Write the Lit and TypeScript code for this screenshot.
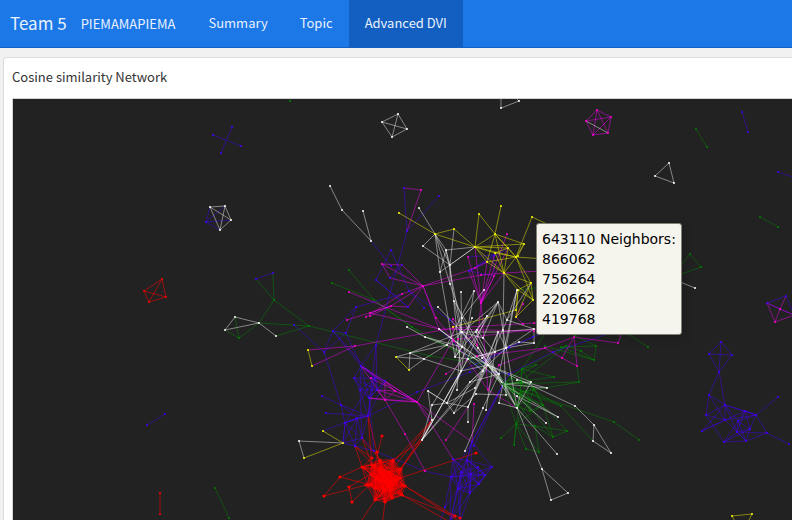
import { LitElement, html, svg, css } from "lit";
import { customElement, property } from "lit/decorators.js";

type Hue = "white" | "yellow" | "magenta" | "blue" | "green" | "red";
type Point = [number, number];

const ORIGIN: Point = [13, 99];

/** Nodes whose colour differs from the last chain that visits them. */
const PINNED: Record<string, Hue> = {
  "206,222": "blue", "435,234": "yellow", "475,247": "yellow", "404,188": "blue",
  "407,231": "blue", "487,262": "yellow", "495,253": "yellow", "508,248": "yellow",
  "504,273": "yellow", "469,271": "blue", "402,265": "blue", "390,278": "blue",
  "408,307": "blue", "308,350": "yellow", "312,366": "yellow", "274,300": "green",
  "239,338": "green", "309,326": "green", "396,357": "yellow", "409,370": "yellow",
  "343,443": "yellow", "304,458": "yellow", "767,303": "blue", "786,296": "blue",
  "472,442": "blue", "453,459": "blue", "361,366": "blue", "377,390": "blue",
  "385,381": "blue", "476,453": "red", "374,300": "green", "518,290": "yellow",
  "533,300": "yellow", "531,283": "yellow", "481,303": "magenta", "488,390": "magenta",
  "586,121": "magenta", "608,133": "magenta", "454,229": "yellow", "509,374": "blue",
};

/** Chains of linked nodes, one string per chain: "x,y x,y ...". */
const CHAINS: [Hue, string[]][] = [
  ["green", [
    "290,98 290,101", "696,129 707,147", "760,217 778,227", "670,278 701,267 690,254 672,277",
    "215,488 229,518", "256,279 274,300 273,273", "259,323 274,300 309,326 259,323 239,338 225,330",
    "235,317 239,338", "276,336 309,326 430,356 488,365", "349,270 374,300 412,327 470,359 503,384",
    "332,283 374,300 425,337 488,365", "575,336 596,346 594,360 561,347 596,346", "625,332 648,347",
    "545,346 594,360", "566,346 581,351 594,360", "577,366 579,382 522,392", "522,369 554,377 503,384",
    "522,369 503,384 536,365 522,369 520,395", "503,384 614,422 639,440", "503,384 561,406 593,441",
    "503,384 535,426 516,424 526,449 539,452 516,424", "516,424 501,438", "516,424 514,445 520,395",
    "535,426 553,437 567,431 535,426", "543,405 553,437", "543,405 567,431", "535,426 539,452",
    "488,365 561,406", "522,369 566,346 520,382", "522,369 543,405 516,424", "503,384 579,382",
    "518,290 560,285", "488,365 520,395", "503,384 543,405", "488,365 503,384 522,369",
    "520,395 553,437", "516,424 530,400", "503,384 516,424", "545,334 522,369",
  ]],
  ["blue", [
    "213,135 241,146", "232,127 221,153", "147,425 165,414", "742,112 748,132", "778,172 796,178",
    "210,207 206,222 225,206", "231,220 206,222 220,230", "256,279 273,273", "371,241 391,266",
    "404,188 407,231 439,196", "407,231 376,345 361,366", "376,345 368,416", "391,250 409,291 450,320 488,365",
    "409,291 424,308", "468,257 494,255 469,271 487,262", "494,276 469,271 508,248", "494,276 494,255",
    "294,325 324,352 341,405 357,418", "324,352 333,331 346,333 324,352", "333,331 356,307 346,333",
    "333,331 361,366 346,333", "356,307 402,294", "322,396 341,405 368,416 326,413", "323,431 357,418 368,416",
    "368,416 417,392 470,372 509,347 545,332", "461,371 533,337", "345,423 343,443", "369,398 374,451",
    "360,390 362,438", "374,451 425,471 451,477", "509,374 472,442", "503,384 472,442", "509,374 553,352 620,330",
    "503,384 474,446", "408,307 376,280", "390,278 402,265", "439,329 483,371 509,374",
    "376,345 377,390", "333,331 375,378", "361,366 385,381", "361,366 369,398", "391,250 376,280 408,307",
    "368,416 375,378 345,423", "360,390 368,416 385,381", "341,405 345,423 357,418",
    "721,342 709,354 732,355 721,342 719,372 709,354", "732,355 719,372 709,395 725,405 719,372",
    "709,395 706,415 725,405 725,420 709,395", "706,415 725,420 702,431 725,405 745,411 756,415",
    "706,415 724,442 746,441 767,433 756,415 778,397", "767,433 789,444", "724,442 738,421 725,405",
    "702,431 725,420 745,411", "767,433 737,432 724,442 750,429", "725,420 756,415", "725,405 737,432",
    "725,405 756,415", "725,420 746,441", "767,303 786,296 794,315", "767,303 794,315",
    "445,507 451,477 450,522 458,489 445,507", "470,493 460,522 458,489", "479,484 492,467 467,460 485,475",
    "492,467 471,474", "450,522 461,472 460,522", "445,507 440,522", "472,442 451,477 485,475",
    "472,442 470,493", "453,459 479,484", "472,442 458,489", "453,459 458,489 492,467", "472,442 492,467",
    "467,460 470,493 451,477", "471,474 450,522", "470,493 450,522",
  ]],
  ["magenta", [
    "586,121 597,110 611,117 608,133 593,135 586,121 611,117 593,135 597,110 608,133",
    "404,188 421,190 407,231", "382,264 423,286 402,265 382,264 390,278 423,286", "423,286 475,268 487,262",
    "423,286 481,275 504,273 560,270", "423,286 391,306 408,307 423,286", "423,286 439,329", "423,286 436,318 453,340",
    "507,234 481,303 475,247", "487,262 481,303 495,253", "469,271 481,303 508,248", "494,276 481,303 504,273",
    "481,303 468,257", "481,303 488,390 454,341", "481,303 477,345", "308,350 355,346 312,366",
    "355,346 453,328 534,323 562,325", "349,292 439,329 534,331", "366,317 402,294 423,286", "391,306 347,320",
    "453,319 477,345 488,365", "446,374 468,359", "417,402 453,340 453,319", "545,348 562,358 577,366 574,337 545,348",
    "574,337 562,358", "574,337 618,343 622,332", "545,348 477,356", "517,408 488,390 499,365 545,348",
    "417,402 385,400 361,366 395,391 417,402", "385,400 377,390 417,402 385,381 395,391 385,400",
    "385,381 385,400 369,398 417,402", "377,390 395,391", "371,378 417,402", "385,400 405,434 425,471",
    "417,402 472,442 474,404", "417,402 453,459", "417,402 432,420", "446,440 468,407", "523,304 516,317 523,324",
    "775,322 794,315 780,309 775,322 767,303 780,309 786,296", "458,339 560,326", "361,366 417,402",
    "391,306 370,313 439,329", "391,306 370,316",
  ]],
  ["yellow", [
    "399,213 435,234 454,229 475,247 435,234", "479,214 475,247 508,248 495,234 479,214", "501,206 495,234 524,244 516,257 495,234 504,273",
    "475,247 516,257 504,273 475,247 487,262 516,257 508,248", "475,247 524,244", "475,247 495,234 487,262 504,273 495,253 516,257",
    "495,253 508,248 504,273", "516,257 532,217 560,230", "524,244 518,256", "516,257 560,260", "516,257 531,283 518,290 504,273 533,300 516,257",
    "518,290 533,300 531,283", "518,290 516,317 533,300", "516,317 531,283", "504,273 531,283", "475,247 495,253",
    "453,327 516,310 518,290", "308,350 312,366", "396,357 409,370", "323,431 343,443 304,458", "732,516 752,514 742,534 732,516",
  ]],
  ["red", [
    "144,291 162,279 166,297 149,302 144,291 166,297", "162,279 149,302", "160,493 160,514",
    "362,467 340,477 324,496 366,485", "340,477 371,485", "349,487 352,502 375,480", "349,487 371,474", "382,436 375,465",
    "368,416 377,452 380,470", "368,416 372,465", "355,446 362,467 372,458 355,446 380,472", "362,438 372,465", "362,438 380,460",
    "374,451 380,460", "422,440 393,460", "422,440 401,469", "432,420 390,472", "432,420 383,473", "422,440 388,485", "432,420 401,469",
    "400,478 476,453", "405,486 460,522", "402,495 460,518", "402,495 450,522", "405,486 455,516", "385,502 382,526", "375,500 358,526",
  ]],
  ["white", [
    "382,122 398,114 407,129 392,137 382,122 407,129", "398,114 392,137", "501,96 501,108 519,101 514,96",
    "586,121 608,133", "655,176 669,163 674,183 655,176", "695,288 670,278", "210,207 225,206 231,220 220,230 210,207 231,220",
    "225,206 220,230", "330,186 342,210 371,241 363,211", "235,317 225,330 259,323 235,317", "259,323 276,336",
    "419,208 435,234 423,246 450,265 435,234 446,250 475,247 450,265 446,250 440,272 435,234", "454,229 450,265 450,284 462,318",
    "440,272 475,247", "440,272 455,357", "446,250 462,332", "450,265 461,371", "435,234 450,284",
    "407,327 425,337 447,345 488,365", "425,337 462,347", "396,357 410,353 424,359 396,357", "410,353 409,370 424,359 447,345 410,353",
    "424,359 461,371", "410,353 462,332", "454,301 461,332 483,338 477,330", "461,292 462,347 455,357", "438,307 462,332 503,384 454,301",
    "462,318 488,365 439,329 462,347", "461,332 498,332", "474,291 447,345 498,302 483,338", "487,316 455,357 462,318",
    "498,302 432,405", "498,302 517,408", "487,316 447,403", "504,273 503,330 506,395", "495,352 498,332 506,348",
    "472,318 462,347", "507,320 534,329 534,343 519,342 495,352 468,359", "534,329 498,332 483,371", "534,329 506,348 534,343",
    "498,302 507,320 531,283", "507,320 517,290 506,348", "517,290 499,374", "507,320 468,407", "498,332 475,388 447,403",
    "462,347 503,384 476,332", "461,332 499,374 517,408", "439,329 499,374", "474,291 461,371", "462,332 478,348 503,384 517,408",
    "488,365 503,384 520,395 517,408 488,365 531,382 503,384 547,388 517,380", "488,365 499,374",
    "531,382 517,408 499,403 503,384", "503,384 546,423", "503,384 558,417 517,396", "517,408 557,454", "517,408 542,469 551,500 568,493 542,469",
    "488,365 575,406 594,425 593,441 611,453 594,425", "422,440 432,420 428,391 447,403", "432,405 422,440 461,371 447,403 432,405",
    "422,440 461,371 488,365 470,382 454,413", "422,440 468,359 506,348", "422,440 470,382 506,348", "428,391 447,403 468,407 488,365",
    "422,440 483,371 468,407", "468,407 468,422", "454,413 476,394 506,395", "470,382 499,374", "447,403 454,413", "486,410 495,352",
    "465,451 483,408 499,374", "457,390 461,332", "482,358 495,352 483,338", "484,290 462,318", "498,302 477,330",
    "455,357 468,359 483,371", "299,441 343,443", "299,441 304,458",
  ]],
];

/** Dense communities: every pair nearer than the reach is linked. */
const COMMUNITIES: { hue: Hue; reach: number; members: string }[] = [
  { hue: "red", reach: 32, members: "362,467 372,465 380,460 393,460 401,469 400,478 405,486 402,495 392,498 385,502 375,500 367,485 371,474 383,473 390,472 380,481 388,485 396,480 375,488 384,491 391,490 376,478 386,478 381,468 393,485" },
  { hue: "blue", reach: 24, members: "472,442 453,459 467,460 451,477 461,472 471,474 478,467 485,475 479,484 470,493 458,489" },
  { hue: "blue", reach: 26, members: "361,366 354,378 375,378 385,381 360,390 377,390 369,398" },
  { hue: "blue", reach: 31, members: "357,418 368,416 345,423 355,446 362,438 374,451 343,443" },
  { hue: "blue", reach: 24, members: "745,411 756,415 738,421 750,429 737,432 746,441" },
  { hue: "green", reach: 21, members: "503,384 522,369 521,382 520,395 512,391 530,400 543,405 516,406 534,388 530,411" },
];

const parse = (chain: string): Point[] =>
  chain.split(" ").map((pair) => pair.split(",").map(Number) as Point);

const communityPath = (members: string, reach: number): string => {
  const points = parse(members);
  let d = "";
  points.forEach((a, i) =>
    points.slice(i + 1).forEach((b) => {
      if (Math.hypot(a[0] - b[0], a[1] - b[1]) < reach) d += `M${a}L${b}`;
    })
  );
  return d;
};

const nodeHues = (): Map<string, Hue> => {
  const nodes = new Map<string, Hue>();
  CHAINS.forEach(([hue, chains]) =>
    chains.forEach((chain) => chain.split(" ").forEach((key) => nodes.set(key, hue)))
  );
  COMMUNITIES.forEach(({ hue, members }) => members.split(" ").forEach((key) => nodes.set(key, hue)));
  Object.entries(PINNED).forEach(([key, hue]) => nodes.set(key, hue));
  return nodes;
};

@customElement("similarity-network")
export class SimilarityNetwork extends LitElement {
  static styles = css`
    :host { display: block; position: relative; overflow: hidden; background: #222; border: 1px solid #d3d3d3; border-right: 0; border-bottom: 0; }
    .graph { width: 100%; height: 100%; position: absolute; inset: 0; }
    .edge { fill: none; stroke-width: 1; stroke-opacity: 0.45; }
    .edge.white { stroke: #fff; }
    .edge.yellow { stroke: #ff0; }
    .edge.magenta { stroke: #f0f; }
    .edge.blue { stroke: #40f; }
    .edge.green { stroke: #008c00; }
    .edge.red { stroke: #f00; stroke-opacity: 0.55; }
    .node.white { fill: #fff; }
    .node.yellow { fill: #ff0; }
    .node.magenta { fill: #f0c; }
    .node.blue { fill: #40f; }
    .node.green { fill: #008000; }
    .node.red { fill: #f00; }
    .tooltip {
      position: absolute; left: 523px; top: 124px; box-sizing: border-box; padding: 5px;
      font: 14px/20px "DejaVu Sans", sans-serif; color: #000; white-space: nowrap;
      background: #f5f4ed; border: 1px solid #808074; border-radius: 3px;
      box-shadow: 3px 3px 10px rgba(0, 0, 0, 0.2);
    }
  `;

  @property() subject = "643110";
  @property({ type: Array }) neighbors = ["866062", "756264", "220662", "419768"];

  render() {
    return html`
      <svg class="graph" role="img" aria-label="Network graph">
        <g transform="translate(${-ORIGIN[0]} ${-ORIGIN[1]})">
          ${CHAINS.map(([hue, chains]) =>
            chains.map((chain) => svg`<path class="edge ${hue}" d="M${parse(chain).join("L")}"></path>`)
          )}
          ${COMMUNITIES.map(
            ({ hue, reach, members }) => svg`<path class="edge ${hue}" d=${communityPath(members, reach)}></path>`
          )}
          ${[...nodeHues()].map(([key, hue]) => {
            const [x, y] = key.split(",").map(Number);
            const radius = hue === "red" && x > 300 ? 1.6 : 1;
            return svg`<circle class="node ${hue}" cx=${x} cy=${y} r=${radius}></circle>`;
          })}
        </g>
      </svg>
      <div class="tooltip" role="tooltip">
        <div>${this.subject} Neighbors:</div>
        ${this.neighbors.map((id) => html`<div>${id}</div>`)}
      </div>
    `;
  }
}

@customElement("app-root")
export class AppRoot extends LitElement {
  static styles = css`
    :host {
      display: flex; flex-direction: column; height: 100vh; overflow: hidden;
      font: 13px/20px "Noto Sans CJK KR", "Source Sans Pro", sans-serif; color: #333; background: #f1f1f1;
    }
    .navbar { display: flex; flex: none; height: 47px; background: #1d78e7; border-bottom: 1px solid #1360c2; color: #e8f1fd; }
    .navbar a { color: inherit; text-decoration: none; display: flex; align-items: center; }
    .navbar .brand { padding: 0 14px 2px 10px; font-size: 17px; }
    .navbar .user { padding-right: 17px; }
    .tabs { display: flex; }
    .navbar .tab { padding: 0 16px 2px; }
    .navbar .active { background: #135fc1; }
    .card {
      display: flex; flex-direction: column; flex: 1; margin: 9px 0 0 3px; padding: 0 0 0 8px;
      background: #fff; border: 1px solid #ddd; border-width: 1px 0 0 1px; border-radius: 3px 0 0 0;
    }
    .title { margin: 0; padding: 9px 0 11px; font-size: 13px; line-height: 20px; font-weight: 400; }
    .plot { flex: 1; }
  `;

  render() {
    const tabs = ["Summary", "Topic", "Advanced DVI"];
    return html`
      <nav class="navbar">
        <a class="brand" href="#">Team 5</a>
        <a class="user" href="#">PIEMAMAPIEMA</a>
        <div class="tabs">
          ${tabs.map((tab, i) => html`<a class="tab ${i === 2 ? "active" : ""}" href="#">${tab}</a>`)}
        </div>
      </nav>
      <main class="card">
        <h1 class="title">Cosine similarity Network</h1>
        <similarity-network class="plot"></similarity-network>
      </main>
    `;
  }
}
